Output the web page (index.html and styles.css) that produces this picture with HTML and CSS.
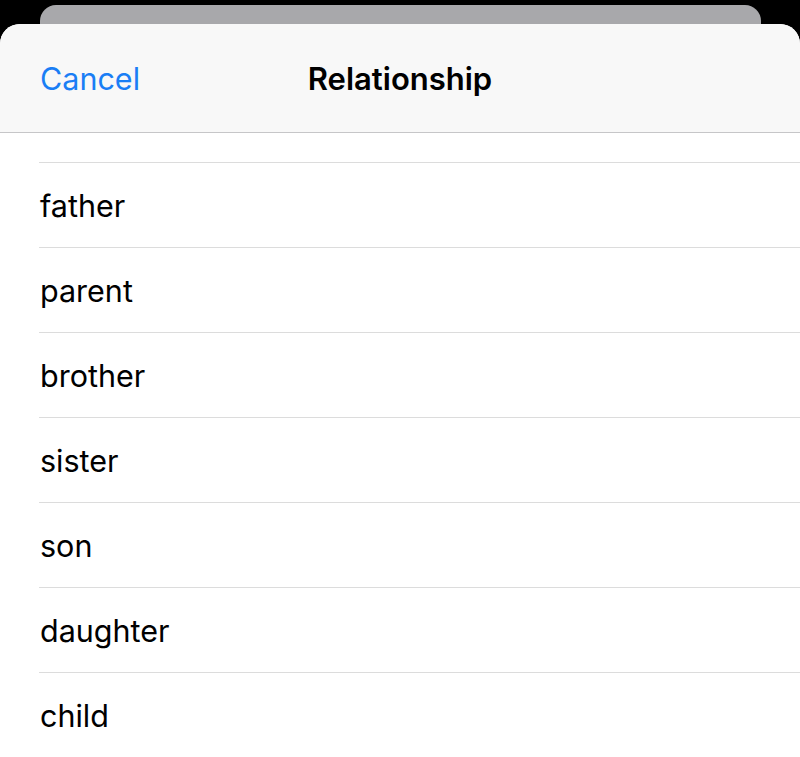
FILE: index.html
```html
<!DOCTYPE html>
<html>
<head>
<meta charset="utf-8">
<link rel="stylesheet" href="styles.css">
</head>
<body>
<div class="back-card"></div>
<div class="sheet">
  <div class="header">
    <span class="cancel">Cancel</span>
    <span class="title">Relationship</span>
    <span></span>
  </div>
  <div class="list">
    <div class="row">father</div>
    <div class="row">parent</div>
    <div class="row">brother</div>
    <div class="row">sister</div>
    <div class="row">son</div>
    <div class="row">daughter</div>
    <div class="row">child</div>
  </div>
</div>
</body>
</html>
```
FILE: styles.css
```css
html, body {
  margin: 0;
  padding: 0;
}
body {
  background: #000;
  height: 757px;
  overflow: hidden;
  font-family: Inter, "Liberation Sans", sans-serif;
}
.back-card {
  margin: 5px 39px 0 40px;
  height: 19px;
  background: #a8a8ab;
  border-radius: 16px 16px 0 0;
}
.sheet {
  background: #fff;
  border-radius: 20px 20px 0 0;
  overflow: hidden;
  height: 740px;
}
.header {
  height: 108px;
  background: #f8f8f8;
  border-bottom: 1px solid #c6c6c8;
  display: grid;
  grid-template-columns: 1fr auto 1fr;
  align-items: center;
  padding: 0 40px;
}
.cancel {
  color: #1a7ef5;
  font-size: 30.5px;
  justify-self: start;
}
.title {
  color: #000;
  font-size: 31px;
  font-weight: 600;
}
.list {
  padding-left: 39px;
  padding-top: 29px;
}
.row {
  border-top: 1px solid #dcdcdc;
  height: 84px;
  display: flex;
  align-items: center;
  font-size: 30.5px;
  color: #000;
  padding-left: 1px;
}
.row:last-child {
  border-bottom: 1px solid #dcdcdc;
}
```
